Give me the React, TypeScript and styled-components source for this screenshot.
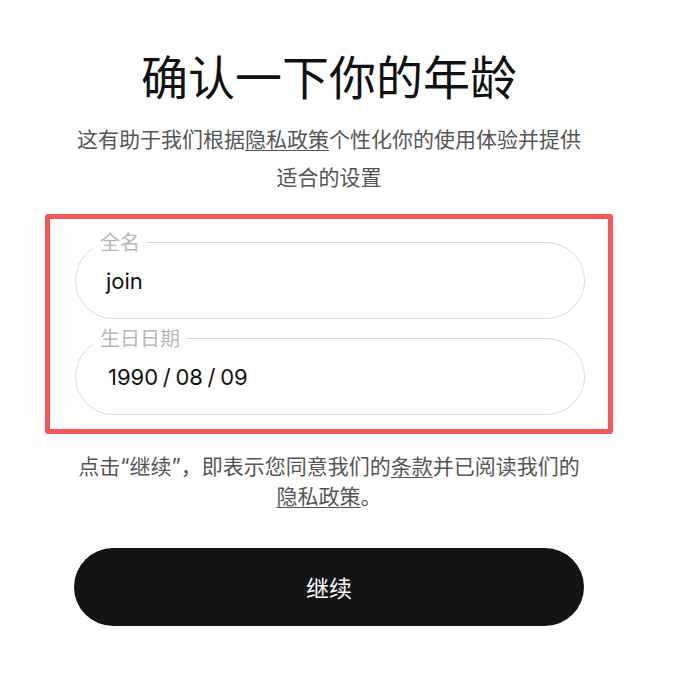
import React from 'react';
import styled, { createGlobalStyle } from 'styled-components';

const GlobalStyle = createGlobalStyle`
  html, body {
    margin: 0;
    padding: 0;
    background: #ffffff;
  }
  body {
    font-family: Inter, "Noto Sans CJK SC", sans-serif;
    color: #111;
  }
`;

const Page = styled.div`
  width: 658px;
  display: flex;
  flex-direction: column;
  align-items: center;
  padding-top: 46px;
`;

const Title = styled.h1`
  margin: 0;
  font-size: 47px;
  font-weight: 400;
  line-height: 58px;
  color: #111;
  font-family: "Noto Sans CJK SC", sans-serif;
`;

const Lead = styled.p`
  width: 510px;
  margin: 17px 0 0;
  font-size: 21px;
  line-height: 38px;
  color: #555;
  text-align: center;
  font-family: Inter, "Noto Sans CJK SC", sans-serif;
`;

const Link = styled.a`
  color: #555;
  text-decoration: underline;
  text-underline-offset: 3px;
  text-decoration-thickness: 1px;
`;

const Highlight = styled.div`
  margin-top: 17px;
  width: 568px;
  box-sizing: border-box;
  border: 5px solid #f65656;
  border-radius: 3px;
  padding: 9px 23px 14px 25px;
  display: flex;
  flex-direction: column;
  gap: 5px;
`;

const Field = styled.fieldset`
  margin: 0;
  min-width: 0;
  padding: 0 17px 12px;
  border: 1px solid #d9d9d9;
  border-radius: 39px;
`;

const Legend = styled.legend`
  padding: 0 7px;
  font-size: 20px;
  line-height: 28px;
  color: #b8b8b8;
  font-family: "Noto Sans CJK SC", sans-serif;
`;

const Value = styled.div<{ $indent?: number; $tight?: boolean }>`
  height: 50px;
  display: flex;
  align-items: center;
  padding-left: ${(p) => p.$indent ?? 13}px;
  font-size: 22px;
  color: #111;
  font-family: Inter, sans-serif;
  white-space: pre;
  word-spacing: ${(p) => (p.$tight ? '-1.5px' : 'normal')};
`;

const Note = styled.p`
  width: 510px;
  margin: 18px 0 0;
  font-size: 21px;
  line-height: 30px;
  color: #555;
  text-align: center;
  font-family: Inter, "Noto Sans CJK SC", sans-serif;
`;

const ContinueButton = styled.button`
  margin-top: 36px;
  width: 510px;
  height: 78px;
  border: none;
  border-radius: 39px;
  background: #141414;
  color: #fff;
  font-size: 23px;
  font-family: "Noto Sans CJK SC", sans-serif;
  cursor: pointer;
`;

export default function App() {
  return (
    <>
      <GlobalStyle />
      <Page>
        <Title>确认一下你的年龄</Title>
        <Lead>
          这有助于我们根据<Link href="#">隐私政策</Link>个性化你的使用体验并提供适合的设置
        </Lead>
        <Highlight>
          <Field>
            <Legend>全名</Legend>
            <Value>join</Value>
          </Field>
          <Field>
            <Legend>生日日期</Legend>
            <Value $indent={15} $tight>1990 / 08 / 09</Value>
          </Field>
        </Highlight>
        <Note>
          点击“继续”，即表示您同意我们的<Link href="#">条款</Link>并已阅读我们的
          <Link href="#">隐私政策</Link>。
        </Note>
        <ContinueButton>继续</ContinueButton>
      </Page>
    </>
  );
}
